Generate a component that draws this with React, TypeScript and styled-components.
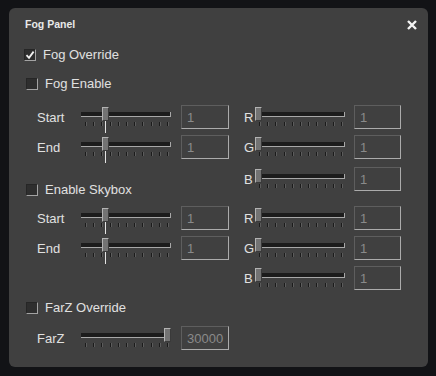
import React from 'react';
import styled, { createGlobalStyle } from 'styled-components';

const GlobalStyle = createGlobalStyle`
  html, body {
    margin: 0;
    padding: 0;
    background: #121316;
  }
  body {
    font-family: 'Liberation Sans', Arial, sans-serif;
    overflow: hidden;
  }
`;

type SliderProps = { value: number; marker?: boolean };

const Slider = ({ value, marker }: SliderProps) => {
  const left = Math.round(value * (90 - 7));
  return (
    <SliderFrame>
      <Track />
      <TickRow>
        {Array.from({ length: 11 }).map((_, i) => (
          <Tick key={i} />
        ))}
      </TickRow>
      <Thumb style={{ left }} />
      {marker && <Marker style={{ left: left + 3 }} />}
    </SliderFrame>
  );
};

const CheckMark = () => (
  <svg width="10" height="10" viewBox="0 0 10 10">
    <path d="M1.5 5.2 L4 7.8 L8.6 1.6" fill="none" stroke="#f2f2f2" strokeWidth="1.8" />
  </svg>
);

const Check = ({ row, label, checked, shift }: { row: number; label: string; checked?: boolean; shift?: boolean }) => (
  <CheckRow $row={row} $shift={shift}>
    <CheckBox>{checked && <CheckMark />}</CheckBox>
    <CheckLabel>{label}</CheckLabel>
  </CheckRow>
);

const Field = ({ row, label, value, text, marker = true }: { row: number; label: string; value: number; text: string; marker?: boolean }) => (
  <FieldRow $row={row}>
    <FieldLabel $width={44}>{label}</FieldLabel>
    <Slider value={value} marker={marker} />
    <ValueBox $gap={10}>{text}</ValueBox>
  </FieldRow>
);

const Color = ({ row, label, top }: { row: number; label: string; top?: boolean }) => (
  <ColorRow $row={row} $top={top}>
    <FieldLabel $width={11}>{label}</FieldLabel>
    <Slider value={0} />
    <ValueBox $gap={9}>1</ValueBox>
  </ColorRow>
);

const App = () => {
  return (
    <Page>
      <GlobalStyle />
      <Panel>
        <TitleBar>
          <Title>Fog Panel</Title>
          <Close>
            <svg width="10" height="10" viewBox="0 0 10 10">
              <path d="M1 1 L9 9 M9 1 L1 9" stroke="#f4f4f4" strokeWidth="2.4" />
            </svg>
          </Close>
        </TitleBar>
        <Body>
          <Check row={1} label="Fog Override" checked shift />
          <Check row={2} label="Fog Enable" />
          <Field row={3} label="Start" value={0.253} text="1" />
          <Field row={4} label="End" value={0.253} text="1" />
          <Color row={3} label="R" />
          <Color row={4} label="G" />
          <Color row={5} label="B" top />

          <SkyboxCheck>
            <CheckBox />
            <CheckLabel>Enable Skybox</CheckLabel>
          </SkyboxCheck>
          <Field row={6} label="Start" value={0.253} text="1" />
          <Field row={7} label="End" value={0.253} text="1" />
          <Color row={6} label="R" />
          <Color row={7} label="G" />
          <Color row={8} label="B" />

          <Check row={9} label="FarZ Override" />
          <Field row={10} label="FarZ" value={1} text="30000" marker={false} />
        </Body>
      </Panel>
    </Page>
  );
};

export default App;

const Page = styled.div`
  width: 436px;
  height: 376px;
  padding: 8px 0 0 9px;
  box-sizing: border-box;
`;

const Panel = styled.div`
  width: 419px;
  height: 359px;
  background-color: #404040;
  border-radius: 6px;
  display: flex;
  flex-direction: column;
`;

const TitleBar = styled.div`
  height: 30px;
  padding: 0 11px 0 16px;
  display: flex;
  align-items: center;
  justify-content: space-between;
`;

const Title = styled.div`
  font-weight: 700;
  font-size: 10.5px;
  color: #e9e9e9;
  padding-top: 1px;
`;

const Close = styled.div`
  width: 10px;
  height: 10px;
  display: flex;
  margin-top: 3px;
`;

const Body = styled.div`
  display: grid;
  grid-template-columns: 218px 157px;
  grid-template-rows: 16px 30px 24px 24px 35px 24px 24px 24px 24px 24px;
  row-gap: 6px;
  padding: 9px 0 0 17px;
`;

const CheckRow = styled.div<{ $row: number; $shift?: boolean }>`
  grid-column: 1 / span 2;
  grid-row: ${(p) => p.$row};
  align-self: center;
  display: flex;
  align-items: center;
  gap: 7px;
  margin-left: ${(p) => (p.$shift ? '-2px' : '0')};
`;

const SkyboxCheck = styled.div`
  grid-column: 1;
  grid-row: 5;
  align-self: end;
  margin-bottom: 2px;
  height: 16px;
  display: flex;
  align-items: center;
  gap: 7px;
`;

const CheckBox = styled.div`
  width: 12px;
  height: 12px;
  box-sizing: border-box;
  background-color: #2e2e2e;
  border: 1px solid;
  border-color: #262626 #a3a3a3 #a3a3a3 #262626;
  display: flex;
  align-items: center;
  justify-content: center;
`;

const CheckLabel = styled.span`
  font-size: 13px;
  color: #e0e0e0;
  line-height: 16px;
`;

const FieldRow = styled.div<{ $row: number }>`
  grid-column: 1;
  grid-row: ${(p) => p.$row};
  align-self: center;
  display: flex;
  align-items: center;
  padding-left: 11px;
`;

const ColorRow = styled.div<{ $row: number; $top?: boolean }>`
  grid-column: 2;
  grid-row: ${(p) => p.$row};
  align-self: ${(p) => (p.$top ? 'start' : 'center')};
  margin-top: ${(p) => (p.$top ? '2px' : '0')};
  display: flex;
  align-items: center;
`;

const FieldLabel = styled.span<{ $width: number }>`
  width: ${(p) => p.$width}px;
  flex: none;
  font-size: 13px;
  color: #e0e0e0;
  white-space: nowrap;
`;

const ValueBox = styled.div<{ $gap: number }>`
  margin-left: ${(p) => p.$gap}px;
  width: 48px;
  height: 24px;
  box-sizing: border-box;
  border: 1px solid;
  border-color: #5e5e5e #ababab #ababab #5e5e5e;
  padding: 1px 0 0 5px;
  display: flex;
  align-items: center;
  font-size: 13px;
  color: #8a8a8a;
`;

const SliderFrame = styled.div`
  position: relative;
  flex: none;
  width: 90px;
  height: 24px;
  display: flex;
  flex-direction: column;
`;

const Track = styled.div`
  margin-top: 7px;
  height: 4px;
  background-color: #1c1c1c;
  border-bottom: 1px solid #a8a8a8;
  border-right: 1px solid #a8a8a8;
`;

const TickRow = styled.div`
  margin-top: 5px;
  height: 4px;
  display: flex;
  justify-content: space-between;
  padding: 0 2px 0 4px;
`;

const Tick = styled.div`
  width: 2px;
  height: 4px;
  background: linear-gradient(to right, #1b1b1b 50%, #5c5c5c 50%);
`;

const Thumb = styled.div`
  position: absolute;
  top: 2px;
  width: 7px;
  height: 14px;
  box-sizing: border-box;
  background-color: #737373;
  border: 1px solid;
  border-color: #b3b3b3 #3a3a3a #3a3a3a #b3b3b3;
`;

const Marker = styled.div`
  position: absolute;
  top: 16px;
  width: 1px;
  height: 12px;
  background-color: #e4e4e4;
`;
